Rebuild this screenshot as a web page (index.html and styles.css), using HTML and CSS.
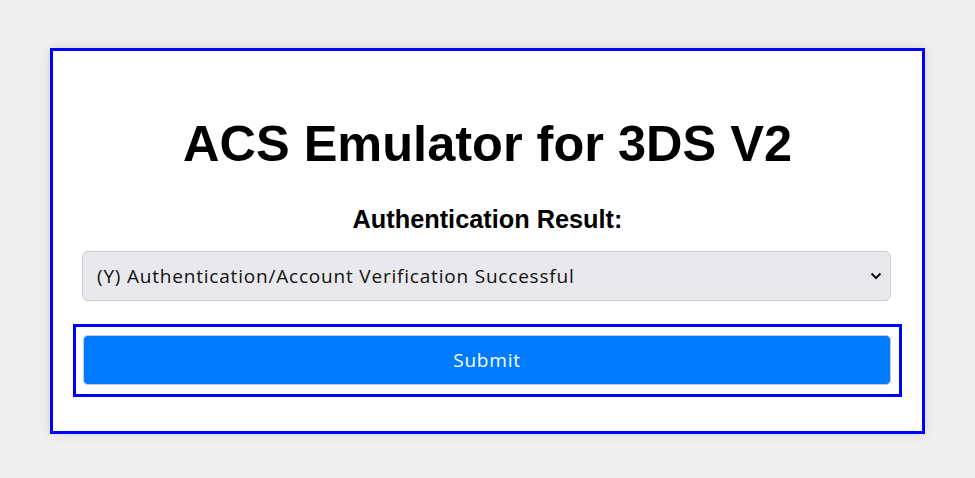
FILE: index.html
```html
<!DOCTYPE html>
<html lang="en">
<head>
    <meta charset="UTF-8" />
    <title>ACS Emulator for 3DS V2</title>
    <link rel="stylesheet" href="styles.css">
</head>
<body>
    <div class="container">
        <h1>ACS Emulator for 3DS V2</h1>

        <form id="acsForm">
            <label for="transStatus">Authentication Result:</label>
            <div class="select-wrap">
                <select id="transStatus" name="transStatus">
                    <option value="Y">(Y) Authentication/Account Verification Successful</option>
                    <option value="N">(N) Not Authenticated/Account Not Verified</option>
                    <option value="U">(U) Authentication/Account Verification Could Not Be Performed</option>
                    <option value="A">(A) Attempts Processing Performed</option>
                    <option value="R">(R) Authentication/Account Verification Rejected</option>
                </select>
                <svg class="chevron" width="12" height="8" viewBox="0 0 12 8">
                    <path d="M1.5 1.5 L6 6 L10.5 1.5" fill="none" stroke="#111" stroke-width="2" />
                </svg>
            </div>
            <div class="submit-box">
                <button type="submit">Submit</button>
            </div>
        </form>
    </div>
</body>
</html>
```

FILE: styles.css
```css
body {
    margin: 0;
    padding: 48px 0;
    background-color: #efefef;
    font-family: "Liberation Sans", Arial, sans-serif;
}

.container {
    width: 829px;
    margin: 0 auto;
    padding: 0 20px;
    background-color: white;
    border: 3px solid #0000ff;
    box-shadow: 0 0 10px rgba(0,0,0,0.12);
}

h1 {
    margin: 0;
    padding-top: 63px;
    font-size: 50.5px;
    font-weight: bold;
    text-align: center;
    color: #000;
}

form {
    padding-top: 32px;
    padding-bottom: 34px;
}

label {
    display: block;
    font-size: 25.3px;
    font-weight: bold;
    text-align: center;
    margin-bottom: 17px;
}

.select-wrap {
    position: relative;
    margin: 0 11px 23px 9px;
}

    .select-wrap select {
        appearance: none;
        -webkit-appearance: none;
        display: block;
        width: 100%;
        height: 50px;
        padding: 0 40px 0 14px;
        background-color: #e9e9ed;
        border: 1px solid #cfcfd4;
        border-radius: 6px;
        font-family: "Open Sans", sans-serif;
        font-size: 19px;
        letter-spacing: 0.8px;
        color: #111;
    }

    .select-wrap .chevron {
        position: absolute;
        right: 9px;
        top: 21px;
        pointer-events: none;
    }

.submit-box {
    border: 3px solid #0000ff;
    padding: 8px 8px 9px 7px;
}

    .submit-box button {
        display: block;
        width: 100%;
        height: 50px;
        background-color: #007bff;
        color: white;
        border: 1px solid #c8ccd2;
        border-radius: 5px;
        font-family: "Open Sans", sans-serif;
        font-size: 19px;
        letter-spacing: 0.8px;
        cursor: pointer;
    }

        .submit-box button:hover {
            background-color: #0069d9;
        }
```
